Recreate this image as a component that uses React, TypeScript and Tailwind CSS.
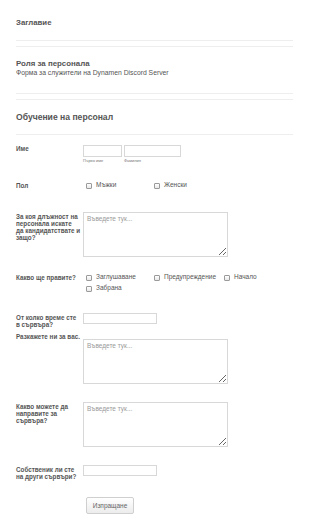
import React from "react";

const font = { fontFamily: '"Liberation Sans", Arial, sans-serif' };

function Box() {
  return (
    <span className="inline-block w-[6px] h-[6px] border border-[#9a9a9a] rounded-[1px] bg-gradient-to-b from-white to-[#e8e8e8] mt-[2px] shrink-0" />
  );
}

function Check({ label }: { label: string }) {
  return (
    <div className="flex items-start gap-[4px] h-[11px] leading-[8px]">
      <Box />
      <span className="text-[6.5px] text-[#555] whitespace-nowrap">{label}</span>
    </div>
  );
}

function Label({ children, mt = "" }: { children: React.ReactNode; mt?: string }) {
  return (
    <div className={`w-[67px] shrink-0 pr-[1px] text-[6.3px] leading-[7px] font-bold text-[#555] whitespace-nowrap ${mt}`}>
      {children}
    </div>
  );
}

function Area({ className = "" }: { className?: string }) {
  return (
    <textarea
      readOnly
      placeholder="Въведете тук..."
      className={`block w-[145px] h-[45px] border border-[#d8d8d8] px-[3px] py-[2px] text-[6.5px] leading-[8px] placeholder:text-[#999] text-[#555] bg-white outline-none resize-y ${className}`}
      style={font}
    />
  );
}

export default function App() {
  return (
    <div className="w-[310px] h-[528px] bg-white overflow-hidden" style={font}>
      <div className="ml-4 w-[277px]">
        <div className="pt-[18px] pb-[12px] border-b border-[#eeeeee]">
          <div className="text-[7.8px] leading-[10px] font-bold text-[#555]">Заглавие</div>
        </div>
        <div className="mt-[5px] border-t border-[#eeeeee] pt-[12px] pb-[16px] border-b">
          <div className="text-[7.9px] leading-[10px] font-bold text-[#555]">Роля за персонала</div>
          <div className="text-[6.8px] leading-[8px] text-[#555]">Форма за служители на Dynamen Discord Server</div>
        </div>
        <div className="mt-[5px] border-t border-[#eeeeee] pt-[12px] pb-[11px] border-b">
          <div className="text-[8.6px] leading-[11px] font-bold text-[#555]">Обучение на персонал</div>
        </div>

        {/* Име */}
        <div className="flex mt-[10px]">
          <Label mt="mt-[0px]">Име</Label>
          <div className="flex gap-[2px]">
            <div>
              <div className="w-[39px] h-[12px] border border-[#d8d8d8]" />
              <div className="text-[4px] leading-[6px] text-[#777] mt-[1px]">Първо име</div>
            </div>
            <div>
              <div className="w-[57px] h-[12px] border border-[#d8d8d8]" />
              <div className="text-[4px] leading-[6px] text-[#777] mt-[1px]">Фамилия</div>
            </div>
          </div>
        </div>

        {/* Пол */}
        <div className="flex mt-[17px] items-start">
          <Label mt="mt-[1px]">Пол</Label>
          <div className="grid grid-cols-[68px_70px] pl-[3px]">
            <Check label="Мъжки" />
            <Check label="Женски" />
          </div>
        </div>

        {/* Длъжност */}
        <div className="flex mt-[20px] items-start">
          <Label mt="mt-[1px]">
            За коя длъжност на
            <br />
            персонала искате
            <br />
            да кандидатствате и
            <br />
            защо?
          </Label>
          <Area />
        </div>

        {/* Какво ще правите */}
        <div className="flex mt-[16px] items-start">
          <Label mt="mt-[1px]">Какво ще правите?</Label>
          <div className="grid grid-cols-[68px_70px_auto] pl-[3px]">
            <Check label="Заглушаване" />
            <Check label="Предупреждение" />
            <Check label="Начало" />
            <Check label="Забрана" />
          </div>
        </div>

        {/* От колко време */}
        <div className="flex mt-[18px] items-start">
          <Label mt="mt-[1px]">
            От колко време сте
            <br />в сървъра?
          </Label>
          <div className="w-[74px] h-[11px] border border-[#d8d8d8]" />
        </div>

        {/* Разкажете */}
        <div className="flex mt-[5px] items-start">
          <Label>Разкажете ни за вас.</Label>
          <Area className="mt-[6px] h-[44px]" />
        </div>

        {/* Какво можете */}
        <div className="flex mt-[18px] items-start">
          <Label mt="mt-[1px]">
            Какво можете да
            <br />
            направите за
            <br />
            сървъра?
          </Label>
          <Area className="h-[44px]" />
        </div>

        {/* Собственик */}
        <div className="flex mt-[18px] items-start">
          <Label mt="mt-[1px]">
            Собственик ли сте
            <br />
            на други сървъри?
          </Label>
          <div className="w-[74px] h-[11px] border border-[#d8d8d8]" />
        </div>

        <div className="mt-[17px] ml-[70px]">
          <button
            className="w-[48px] h-[17px] border border-[#cfcfcf] rounded-[2px] bg-gradient-to-b from-white to-[#ececec] text-[6.5px] text-[#666] flex items-center justify-center"
            style={font}
          >
            Изпращане
          </button>
        </div>
      </div>
    </div>
  );
}
